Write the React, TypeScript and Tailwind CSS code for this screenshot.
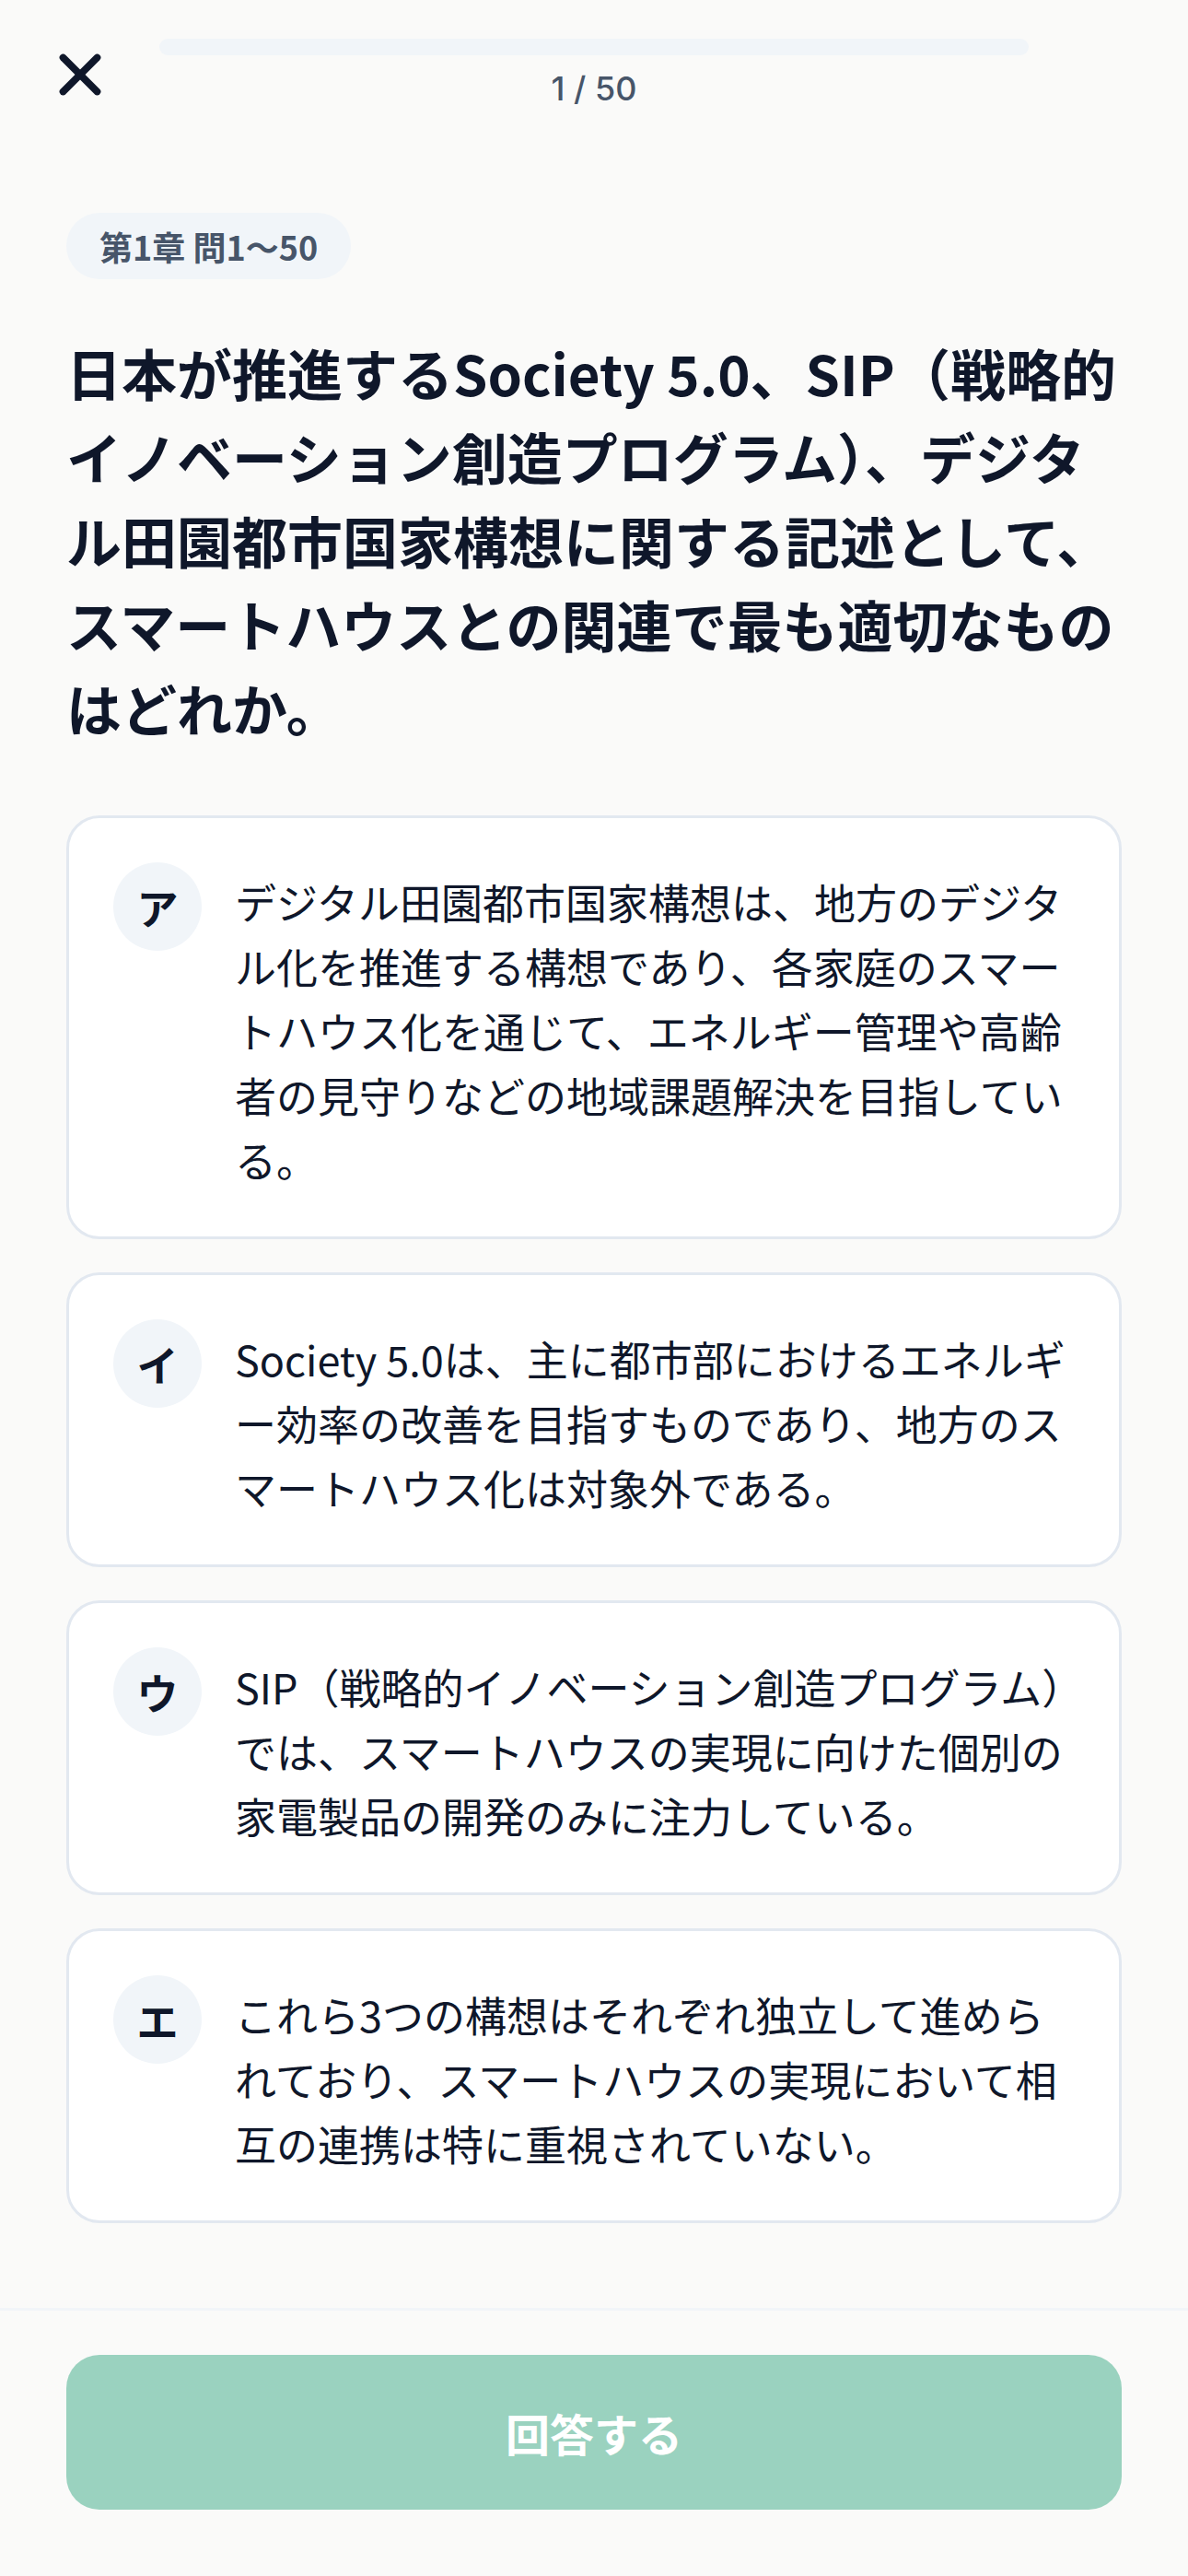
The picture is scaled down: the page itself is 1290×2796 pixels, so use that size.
import { X } from 'lucide-react'

type Choice = {
  label: string
  text: string
}

const CHOICES: Choice[] = [
  {
    label: 'ア',
    text: 'デジタル田園都市国家構想は、地方のデジタル化を推進する構想であり、各家庭のスマートハウス化を通じて、エネルギー管理や高齢者の見守りなどの地域課題解決を目指している。',
  },
  {
    label: 'イ',
    text: 'Society 5.0は、主に都市部におけるエネルギー効率の改善を目指すものであり、地方のスマートハウス化は対象外である。',
  },
  {
    label: 'ウ',
    text: 'SIP（戦略的イノベーション創造プログラム）では、スマートハウスの実現に向けた個別の家電製品の開発のみに注力している。',
  },
  {
    label: 'エ',
    text: 'これら3つの構想はそれぞれ独立して進められており、スマートハウスの実現において相互の連携は特に重視されていない。',
  },
]

function ChoiceCard({ choice }: { choice: Choice }) {
  return (
    <button className="flex w-full items-start gap-[36px] rounded-[36px] border-[3px] border-[#e2e8f0] bg-white py-[48px] pl-[48px] pr-[40px] text-left">
      <span className="flex h-[96px] w-[96px] shrink-0 items-center justify-center rounded-full bg-[#f1f5f9] text-[45px] font-bold leading-none text-[#0f172a]">
        {choice.label}
      </span>
      <span className="flex-1 pt-[8px] text-[45px] leading-[70px] text-[#0f172a]">{choice.text}</span>
    </button>
  )
}

export default function App() {
  const current = 1
  const total = 50
  const answered = 0

  return (
    <div className="flex h-[2796px] flex-col bg-[#fafaf9] font-[family-name:'Noto_Sans_CJK_JP','Noto_Sans',sans-serif] text-[#0f172a]">
      {/* header */}
      <header className="flex items-center gap-[49px] px-[50px] pt-[42px]">
        <button className="flex h-[74px] w-[74px] shrink-0 items-center justify-center text-[#0f172a]">
          <X size={74} strokeWidth={2.5} />
        </button>
        <div className="flex flex-1 flex-col items-center">
          <div className="h-[18px] w-full overflow-hidden rounded-full bg-[#f1f5f9]">
            <div className="h-full rounded-full bg-emerald-500" style={{ width: `${(answered / total) * 100}%` }} />
          </div>
          <span className="mt-[12px] font-[family-name:Inter,sans-serif] text-[36px] font-medium leading-[48px] text-[#475569]">
            {current} / {total}
          </span>
        </div>
        <div className="w-[74px] shrink-0" />
      </header>

      {/* question */}
      <main className="flex-1 px-[72px] pt-[111px]">
        <div>
          <span className="inline-flex rounded-full bg-[#f1f5f9] px-[36px] py-[12px] text-[36px] font-bold leading-[48px] text-[#475569]">
            第1章 問1〜50
          </span>
        </div>
        <h1 className="mt-[55px] text-[60px] font-bold leading-[91px] text-[#0f172a]">
          日本が推進するSociety 5.0、SIP（戦略的
          <br />
          イノベーション創造プログラム）、デジタ
          <br />
          ル田園都市国家構想に関する記述として、
          <br />
          スマートハウスとの関連で最も適切なもの
          <br />
          はどれか。
        </h1>
        <div className="mt-[72px] flex flex-col gap-[36px]">
          {CHOICES.map((c) => (
            <ChoiceCard key={c.label} choice={c} />
          ))}
        </div>
      </main>

      {/* footer */}
      <footer className="border-t-[3px] border-[#f1f5f9] px-[72px] pb-[72px] pt-[48px]">
        <button
          disabled
          className="flex h-[168px] w-full items-center justify-center rounded-[36px] bg-[#9ad2bf] text-[48px] font-bold text-white"
        >
          回答する
        </button>
      </footer>
    </div>
  )
}
